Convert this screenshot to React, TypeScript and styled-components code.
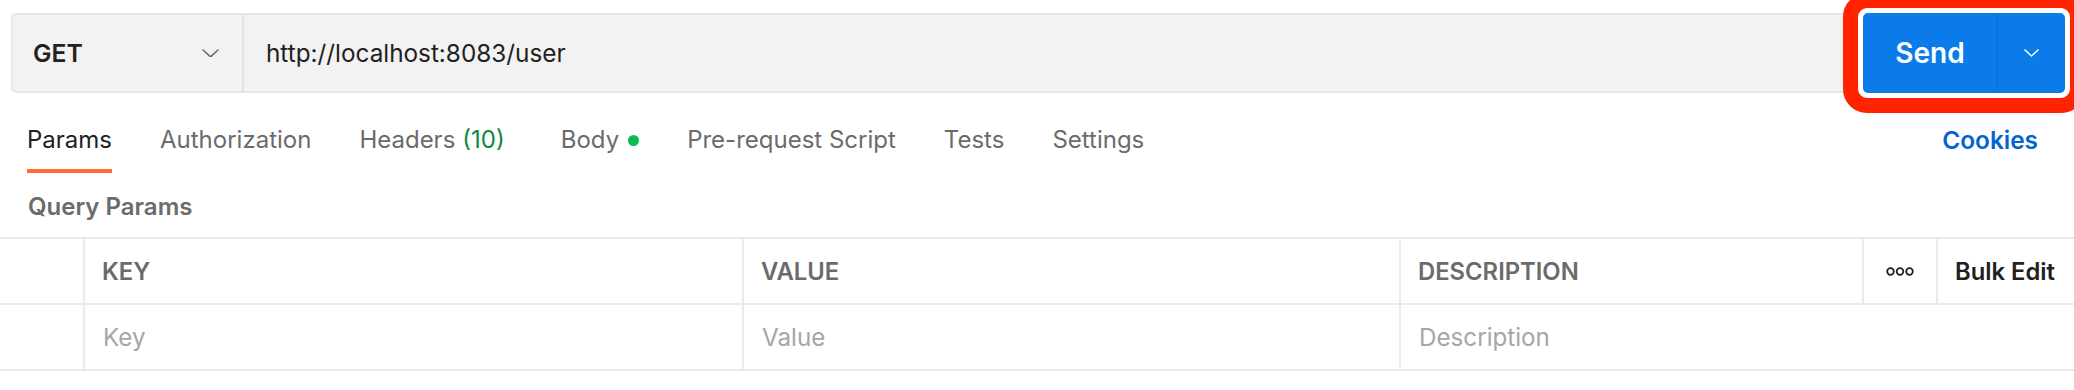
import React from 'react'
import styled, { createGlobalStyle } from 'styled-components'

const GlobalStyle = createGlobalStyle`
  body {
    margin: 0;
    background: #fff;
    font-family: Inter, 'Noto Sans', sans-serif;
    overflow: hidden;
  }
  * { box-sizing: border-box; }
`

const Page = styled.div`
  position: relative;
  width: 2074px;
  height: 390px;
  overflow: hidden;
`

const RequestBar = styled.div`
  display: flex;
  gap: 11px;
  height: 93px;
  padding: 13px 9px 0 11px;
`

const UrlBox = styled.div`
  flex: 1;
  display: flex;
  border: 2px solid #e6e6e6;
  border-radius: 5px;
  background: #f2f2f2;
`

const MethodSelect = styled.div`
  width: 231px;
  display: flex;
  align-items: center;
  justify-content: space-between;
  padding: 0 23px 0 20px;
  border-right: 2px solid #e3e3e3;
  font-size: 24.7px;
  font-weight: 600;
  color: #212121;
`

const UrlText = styled.div`
  flex: 1;
  display: flex;
  align-items: center;
  padding-left: 22px;
  font-size: 24.3px;
  color: #212121;
`

const SendGroup = styled.div`
  width: 202px;
  display: flex;
  border-radius: 5px;
  background: #0b7be9;
  overflow: hidden;
`

const SendButton = styled.div`
  width: 134px;
  display: flex;
  align-items: center;
  justify-content: center;
  color: #fff;
  font-size: 28px;
  font-weight: 600;
`

const DropButton = styled.div`
  flex: 1;
  display: flex;
  align-items: center;
  justify-content: center;
  border-left: 1px solid #0a6ed2;
`

// red annotation drawn over the send button
const Highlight = styled.div`
  position: absolute;
  left: 1843px;
  top: -7px;
  width: 242px;
  height: 120px;
  border: 15px solid #ff2300;
  border-radius: 24px;
  pointer-events: none;
`

const TabBar = styled.div`
  display: flex;
  align-items: flex-start;
  margin-top: 32px;
  padding: 0 36px 0 27px;
`

const TabList = styled.div`
  display: flex;
  gap: 48px;
`

const Tab = styled.div<{ $active?: boolean }>`
  display: flex;
  align-items: center;
  font-size: 24px;
  line-height: 30px;
  padding-bottom: 14px;
  border-bottom: 4px solid ${p => (p.$active ? '#ff6c37' : 'transparent')};
  color: ${p => (p.$active ? '#212121' : '#6b6b6b')};
`

const Count = styled.span`
  color: #0a8a3a;
  margin-left: 7px;
  margin-right: 8px;
`

const Dot = styled.span`
  width: 11px;
  height: 11px;
  border-radius: 50%;
  background: #0cbb52;
  margin-left: 9px;
`

const CookiesLink = styled.div`
  margin-left: auto;
  font-size: 24.4px;
  line-height: 30px;
  font-weight: 600;
  color: #0265d2;
`

const SectionTitle = styled.div`
  margin: 19px 0 15px 28px;
  font-size: 24px;
  line-height: 30px;
  font-weight: 600;
  color: #6b6b6b;
`

const ParamsTable = styled.div`
  display: grid;
  grid-template-columns: 85px 659px 657px 463px 74px 1fr;
  border-top: 2px solid #ebebeb;
`

const Cell = styled.div<{ $last?: boolean; $center?: boolean }>`
  height: 66px;
  display: flex;
  align-items: center;
  justify-content: ${p => (p.$center ? 'center' : 'flex-start')};
  padding-left: ${p => (p.$center ? '0' : '17px')};
  border-bottom: 2px solid #ebebeb;
  border-right: ${p => (p.$last ? 'none' : '2px solid #ebebeb')};
  white-space: nowrap;
`

const HeadLabel = styled.span<{ $dark?: boolean }>`
  font-size: 23.8px;
  font-weight: 600;
  color: ${p => (p.$dark ? '#212121' : '#6b6b6b')};
`

const Placeholder = styled.span`
  font-size: 24.2px;
  color: #a6a6a6;
  padding-left: 1px;
`

const DescriptionCell = styled(Cell)`
  grid-column: 4 / -1;
`

const Chevron = ({ color, w }: { color: string; w: number }) => (
  <svg width={w} height={w / 1.9} viewBox="0 0 17 9" fill="none">
    <path d="M1 1l7.5 7L16 1" stroke={color} strokeWidth="1.6" strokeLinecap="round" strokeLinejoin="round" />
  </svg>
)

const MoreIcon = () => (
  <svg width="28" height="9" viewBox="0 0 28 9" fill="none">
    <circle cx="4.5" cy="4.5" r="3.3" stroke="#212121" strokeWidth="1.8" />
    <circle cx="14" cy="4.5" r="3.3" stroke="#212121" strokeWidth="1.8" />
    <circle cx="23.5" cy="4.5" r="3.3" stroke="#212121" strokeWidth="1.8" />
  </svg>
)

const App = () => {
  return (
    <Page>
      <GlobalStyle />
      <RequestBar>
        <UrlBox>
          <MethodSelect>
            GET
            <Chevron color='#6b6b6b' w={17} />
          </MethodSelect>
          <UrlText>http://localhost:8083/user</UrlText>
        </UrlBox>
        <SendGroup>
          <SendButton>Send</SendButton>
          <DropButton>
            <Chevron color='#ffffff' w={15} />
          </DropButton>
        </SendGroup>
      </RequestBar>
      <Highlight />

      <TabBar>
        <TabList>
          <Tab $active>Params</Tab>
          <Tab>Authorization</Tab>
          <Tab>Headers<Count>(10)</Count></Tab>
          <Tab>Body<Dot /></Tab>
          <Tab>Pre-request Script</Tab>
          <Tab>Tests</Tab>
          <Tab>Settings</Tab>
        </TabList>
        <CookiesLink>Cookies</CookiesLink>
      </TabBar>

      <SectionTitle>Query Params</SectionTitle>

      <ParamsTable>
        <Cell />
        <Cell><HeadLabel>KEY</HeadLabel></Cell>
        <Cell><HeadLabel>VALUE</HeadLabel></Cell>
        <Cell><HeadLabel>DESCRIPTION</HeadLabel></Cell>
        <Cell $center><MoreIcon /></Cell>
        <Cell $last><HeadLabel $dark>Bulk Edit</HeadLabel></Cell>

        <Cell />
        <Cell><Placeholder>Key</Placeholder></Cell>
        <Cell><Placeholder>Value</Placeholder></Cell>
        <DescriptionCell $last><Placeholder>Description</Placeholder></DescriptionCell>
      </ParamsTable>
    </Page>
  )
}

export default App
